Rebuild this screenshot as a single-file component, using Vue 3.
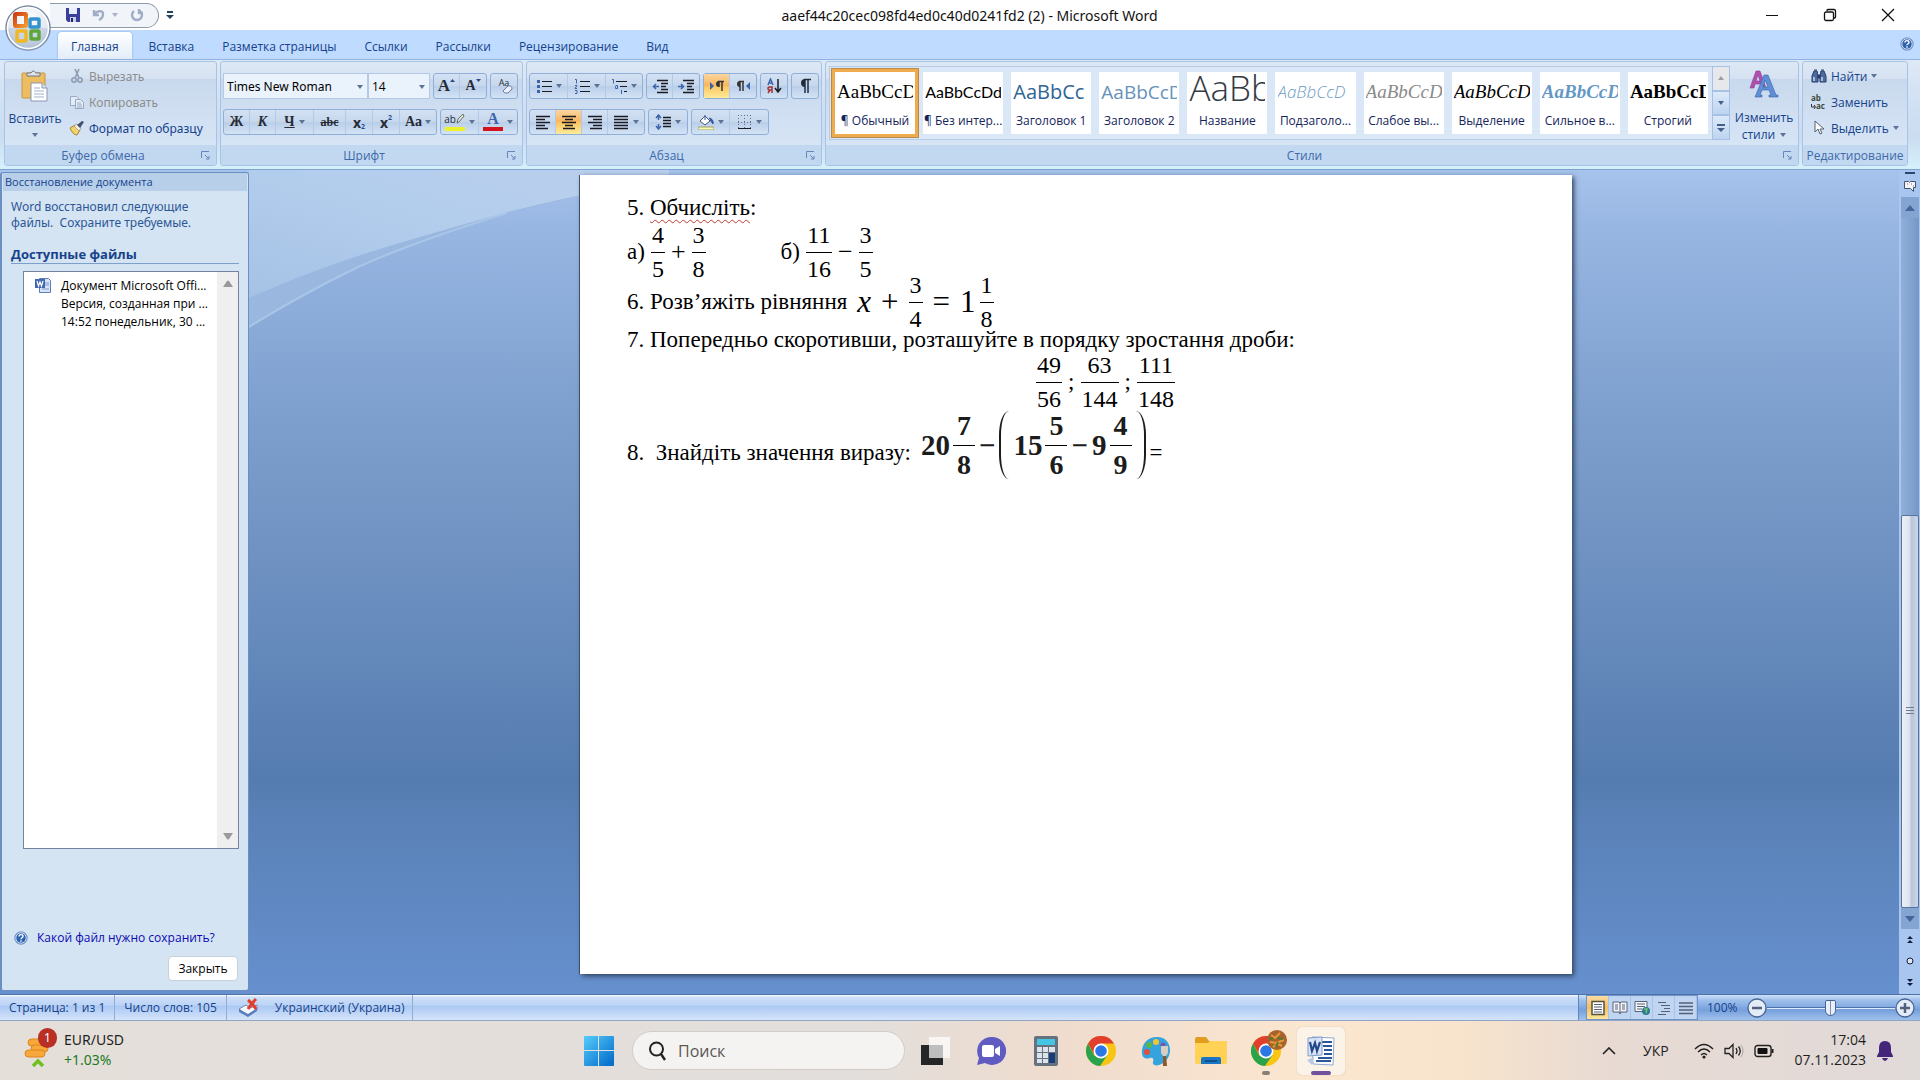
<template>
  <div class="window">
    <header class="title-bar">
      <div class="quick-access">
        <button class="plain" aria-label="Сохранить">
          <svg width="14" height="14" viewBox="0 0 14 14"><path d="M0 0h14v14H2l-2-2z" fill="#3b3f9c" /><path d="M3 0h8v6H3z" fill="#e8eefb" /><path d="M4 9h6v5H4z" fill="#c8d0ee" /><path d="M5 10h2v4H5z" fill="#23266e" /></svg>
        </button>
        <button class="plain undo" aria-label="Отменить">
          <svg width="14" height="14" viewBox="0 0 14 14"><path d="M2 2v5h5M2 7c3-5 9-5 9-1 0 3-2 5-4 6" fill="none" stroke="#9fadc6" stroke-width="2.4" /></svg>
          <svg width="6" height="4" viewBox="0 0 6 4"><path d="M0 0h6L3 4z" fill="#a9b3c4" /></svg>
        </button>
        <button class="plain" aria-label="Повторить">
          <svg width="14" height="14" viewBox="0 0 14 14"><path d="M4 3a5 5 0 1 0 6 0M9 1v4h4" fill="none" stroke="#9fadc6" stroke-width="2.4" /></svg>
        </button>
      </div>
      <button class="plain customize" aria-label="Настройка панели">
        <svg width="8" height="8" viewBox="0 0 8 8"><path d="M1 0h6v2H1zM0 4h8L4 8z" fill="#23415f" /></svg>
      </button>
      <h1>aaef44c20cec098fd4ed0c40d0241fd2 (2) - Microsoft Word</h1>
      <div class="window-buttons">
        <button class="plain" aria-label="Свернуть"><svg width="14" height="14" viewBox="0 0 14 14"><path d="M1 7.500h12" stroke="#111" /></svg></button>
        <button class="plain" aria-label="Восстановить"><svg width="14" height="14" viewBox="0 0 14 14"><path d="M4 3V2.500q0-1 1-1h6q1.500 0 1.500 1.500v6q0 1-1 1H11" fill="none" stroke="#111" stroke-width="1.300" /><rect x="1.500" y="4" width="9" height="8.500" rx="1.500" fill="none" stroke="#111" stroke-width="1.300" /></svg></button>
        <button class="plain" aria-label="Закрыть окно"><svg width="14" height="14" viewBox="0 0 14 14"><path d="M1 1l12 12M13 1L1 13" stroke="#111" stroke-width="1.300" /></svg></button>
      </div>
    </header>

    <button class="orb" aria-label="Office">
      <svg width="48" height="48" viewBox="0 0 48 48">
        <defs>
          <radialGradient id="orbFill" cx=".5" cy=".3" r=".75"><stop offset="0" stop-color="#fff" /><stop offset=".6" stop-color="#e3e8f0" /><stop offset="1" stop-color="#9fb0c8" /></radialGradient>
          <linearGradient id="orange" x2="1" y2="1"><stop offset="0" stop-color="#cf3f12" /><stop offset="1" stop-color="#f49a2e" /></linearGradient>
        </defs>
        <circle cx="24" cy="24" r="22" fill="url(#orbFill)" stroke="#7c8ca6" stroke-width="1.500" />
        <path d="M3 25a21 21 0 0 0 42 0q-21-6-42 0z" fill="#aebfd8" opacity=".5" />
        <circle cx="24" cy="24" r="20.500" fill="none" stroke="#fff" stroke-width="1.500" />
        <rect x="11" y="10" width="11" height="12" rx="1" fill="none" stroke="url(#orange)" stroke-width="4" />
        <rect x="26" y="15" width="9" height="8" rx="1" fill="none" stroke="#3493cf" stroke-width="3.500" />
        <rect x="13" y="27" width="9" height="10" rx="1" fill="none" stroke="#efb825" stroke-width="3.500" />
        <rect x="27" y="27" width="8" height="8" rx="1" fill="none" stroke="#5da63b" stroke-width="3.500" />
      </svg>
    </button>

    <nav class="tabs">
      <a v-for="(tab, index) in tabs" :key="tab" href="#" class="tab" :class="{ active: index === 0 }">{{ tab }}</a>
      <button class="plain help" aria-label="Справка">
        <svg width="14" height="14" viewBox="0 0 14 14"><circle cx="7" cy="7" r="6.300" fill="#2d62ae" stroke="#85a9da" /><circle cx="7" cy="7" r="5.200" fill="none" stroke="#fff" stroke-width=".8" /><path d="M5 5.600q0-2 2-2t2 1.700q0 1-1.200 1.700-.8.500-.8 1.200M7 9.300v1.400" fill="none" stroke="#fff" stroke-width="1.400" /></svg>
      </button>
    </nav>

    <section class="ribbon">
      <div class="group clipboard">
        <div class="group-body">
          <button class="big-button">
            <svg width="28" height="32" viewBox="0 0 28 32"><path d="M1 4q0-1 1-1h21q1 0 1 1v23q0 1-1 1H2q-1 0-1-1z" fill="#edbd62" stroke="#c79743" /><path d="M6 6V3h4q2-4 5 0h4v3z" fill="#dfe3ea" stroke="#6f7786" /><path d="M10 13h11l5 5v13H10z" fill="#fff" stroke="#8a97ac" /><path d="M21 13v5h5" fill="#dbe5f4" stroke="#8a97ac" /><path d="M13 18h6M13 21h10M13 24h10M13 27h10" stroke="#9fb1cf" /></svg>
            <span>Вставить</span>
            <svg class="arrow" width="6" height="4" viewBox="0 0 6 4"><path d="M0 0h6L3 4z" /></svg>
          </button>
          <div class="stack">
            <button class="text-button disabled">
              <svg width="16" height="16" viewBox="0 0 16 16"><path d="M6 1l4 9M10 1L6 10" stroke="#8e9bb0" stroke-width="1.600" /><circle cx="5" cy="12" r="2.200" fill="none" stroke="#8e9bb0" stroke-width="1.500" /><circle cx="11" cy="12" r="2.200" fill="none" stroke="#8e9bb0" stroke-width="1.500" /></svg>
              Вырезать
            </button>
            <button class="text-button disabled">
              <svg width="16" height="16" viewBox="0 0 16 16"><path d="M1.500 2.500h6l2 2v7h-8z" fill="#e6ecf6" stroke="#9aa9c2" /><path d="M6.500 5.500h5l3 3v6h-8z" fill="#e6ecf6" stroke="#9aa9c2" /><path d="M8 9h4M8 11h5M8 13h5" stroke="#9aa9c2" /></svg>
              Копировать
            </button>
            <button class="text-button">
              <svg width="16" height="16" viewBox="0 0 16 16"><path d="M1 8l5-3 5 5-3 5q-4 0-7-7z" fill="#f2d46b" stroke="#a58732" /><path d="M5 6l3-2 4 4-2 3z" fill="#f6f0dc" stroke="#8c8c8c" stroke-width=".7" /><path d="M8 5l5-4 2 1-4 6z" fill="#45526d" /></svg>
              Формат по образцу
            </button>
          </div>
        </div>
        <div class="group-title"><span>Буфер обмена</span><LaunchIcon /></div>
      </div>

      <div class="group font">
        <div class="group-body rows">
          <div class="row">
            <div class="combo">
              <label class="select-box wide"><select aria-label="Шрифт"><option>Times New Roman</option></select><svg class="arrow" width="6" height="4" viewBox="0 0 6 4"><path d="M0 0h6L3 4z" /></svg></label>
              <label class="select-box"><select aria-label="Размер"><option>14</option></select><svg class="arrow" width="6" height="4" viewBox="0 0 6 4"><path d="M0 0h6L3 4z" /></svg></label>
            </div>
            <div class="tools">
              <button class="tool serif big">A<svg class="mark" width="5" height="3" viewBox="0 0 5 3"><path d="M0 3h5L2.500 0z" fill="#2a4a86" /></svg></button>
              <button class="tool serif">A<svg class="mark" width="5" height="3" viewBox="0 0 5 3"><path d="M0 0h5L2.500 3z" fill="#2a4a86" /></svg></button>
            </div>
            <div class="tools">
              <button class="tool clear" aria-label="Очистить формат">Aa<svg class="eraser" width="11" height="9" viewBox="0 0 11 9"><path d="M1 6l5-5q4-1 4 3L6 8Q2 9 1 6z" fill="#eef1fb" stroke="#6a7aa8" /></svg></button>
            </div>
          </div>
          <div class="row">
            <div class="tools">
              <button class="tool serif">Ж</button>
              <button class="tool serif italic">К</button>
              <button class="tool serif split"><u>Ч</u><svg class="arrow" width="6" height="4" viewBox="0 0 6 4"><path d="M0 0h6L3 4z" /></svg></button>
              <button class="tool serif small"><s>abc</s></button>
              <button class="tool sans">x<sub>2</sub></button>
              <button class="tool sans">x<sup>2</sup></button>
              <button class="tool serif case">Aa<svg class="arrow" width="6" height="4" viewBox="0 0 6 4"><path d="M0 0h6L3 4z" /></svg></button>
            </div>
            <div class="tools">
              <button class="tool split color"><span class="swatch yellow">ab<svg width="9" height="11" viewBox="0 0 9 11"><path d="M1 10l1-4 5-5 1 2-5 6z" fill="#dfe4ee" stroke="#6b6f52" /></svg></span><svg class="arrow" width="6" height="4" viewBox="0 0 6 4"><path d="M0 0h6L3 4z" /></svg></button>
              <button class="tool split color"><span class="swatch red">A</span><svg class="arrow" width="6" height="4" viewBox="0 0 6 4"><path d="M0 0h6L3 4z" /></svg></button>
            </div>
          </div>
        </div>
        <div class="group-title"><span>Шрифт</span><LaunchIcon /></div>
      </div>

      <div class="group paragraph">
        <div class="group-body rows">
          <div v-for="(row, r) in paragraphRows" :key="r" class="row">
            <div v-for="(tools, g) in row" :key="g" class="tools">
              <button v-for="tool in tools" :key="tool.name" class="tool" :class="{ split: tool.split, on: tool.on }" :aria-label="tool.name">
                <svg width="16" height="16" viewBox="0 0 16 16">
                  <path v-for="(p, i) in tool.paths" :key="i" :d="p.d" :fill="p.fill || 'none'" :stroke="p.stroke" :stroke-width="p.width || 1" :stroke-dasharray="p.dash" />
                </svg>
                <svg v-if="tool.split" class="arrow" width="6" height="4" viewBox="0 0 6 4"><path d="M0 0h6L3 4z" /></svg>
              </button>
            </div>
          </div>
        </div>
        <div class="group-title"><span>Абзац</span><LaunchIcon /></div>
      </div>

      <div class="group styles">
        <div class="group-body">
          <div class="gallery">
            <button v-for="style in styles" :key="style.label" class="style-card" :class="{ selected: style.selected }">
              <span class="preview" :class="style.kind">{{ style.sample }}</span>
              <span class="style-label">{{ style.label }}</span>
            </button>
          </div>
          <div class="gallery-scroll">
            <button class="off" aria-label="Вверх"><svg width="6" height="4" viewBox="0 0 6 4"><path d="M0 4h6L3 0z" fill="#9c9ca0" /></svg></button>
            <button aria-label="Вниз"><svg width="6" height="4" viewBox="0 0 6 4"><path d="M0 0h6L3 4z" fill="#44618e" /></svg></button>
            <button aria-label="Дополнительно"><svg width="8" height="8" viewBox="0 0 8 8"><path d="M0 0h8v2H0zM0 4h8L4 8z" fill="#44618e" /></svg></button>
          </div>
          <button class="big-button change">
            <svg width="30" height="28" viewBox="0 0 30 28"><path d="M1 18L7 1h4l6 17h-4l-1-4H6l-1 4zM7 11h4L9 5z" fill="#b04fae" stroke="#8a3b93" stroke-width=".6" /><path d="M6 27L15 5h4l8 20h2v2h-9v-2h2l-2-5h-7l-2 5h2v2zM14 17h5l-3-7z" fill="#5f8fd6" stroke="#3763aa" stroke-width=".6" /></svg>
            <span>Изменить</span>
            <span>стили <svg class="arrow" width="6" height="4" viewBox="0 0 6 4"><path d="M0 0h6L3 4z" /></svg></span>
          </button>
        </div>
        <div class="group-title"><span>Стили</span><LaunchIcon /></div>
      </div>

      <div class="group editing">
        <div class="group-body">
          <div class="stack">
            <button class="text-button">
              <svg width="16" height="16" viewBox="0 0 16 16"><path d="M1 14V8l2-5h3l1 5v6zM9 14V8l1-5h3l2 5v6z" fill="#4d6a9c" stroke="#27406e" /><path d="M7 7h2v3H7zM3 2h3M10 2h3" fill="#27406e" stroke="#27406e" /><path d="M3 9v4M11 9v4" stroke="#c8d8f0" stroke-width="1.500" /></svg>
              Найти <svg class="arrow" width="6" height="4" viewBox="0 0 6 4"><path d="M0 0h6L3 4z" /></svg>
            </button>
            <button class="text-button">
              <span class="replace-icon">
                <b>ab</b>
                <b><svg width="5" height="5" viewBox="0 0 5 5"><path d="M.5 0v3H4M3 1l1.500 2L3 5" fill="none" stroke="#333" /></svg>ac</b>
              </span>
              Заменить
            </button>
            <button class="text-button">
              <svg width="16" height="16" viewBox="0 0 16 16"><path d="M4 1v11l3-3 2 5 2-1-2-4h4z" fill="#fff" stroke="#55606f" /></svg>
              Выделить <svg class="arrow" width="6" height="4" viewBox="0 0 6 4"><path d="M0 0h6L3 4z" /></svg>
            </button>
          </div>
        </div>
        <div class="group-title"><span>Редактирование</span></div>
      </div>
    </section>

    <main class="workspace">
      <aside class="recovery">
        <h2>Восстановление документа</h2>
        <p class="hint">Word восстановил следующие<br>файлы.&nbsp; Сохраните требуемые.</p>
        <h3>Доступные файлы</h3>
        <div class="file-list">
          <a href="#" class="file">
            <svg width="16" height="16" viewBox="0 0 16 16"><path d="M4.500 1.500h9l2 2v12h-11z" fill="#d7e3f7" stroke="#5d7fb8" /><path d="M9 6h5M9 8h5M7 12h7" stroke="#7f9bcb" /><path d="M0 2h10v9H0z" fill="#3f68b0" /><path d="M2 4l1.500 5L5 5l1.500 4L8 4" fill="none" stroke="#fff" stroke-width="1.200" /></svg>
            <span>Документ Microsoft Offi...<br>Версия, созданная при ...<br>14:52 понедельник, 30 ...</span>
          </a>
          <div class="list-scroll">
            <svg width="10" height="7" viewBox="0 0 10 7"><path d="M0 7h10L6 1q-1-1-2 0z" fill="#9a9a9a" /></svg>
            <svg width="10" height="7" viewBox="0 0 10 7"><path d="M0 0h10L6 6q-1 1-2 0z" fill="#9a9a9a" /></svg>
          </div>
        </div>
        <a href="#" class="which-file">
          <svg width="14" height="14" viewBox="0 0 14 14"><circle cx="7" cy="7" r="6.300" fill="#2d62ae" stroke="#85a9da" /><circle cx="7" cy="7" r="5.200" fill="none" stroke="#fff" stroke-width=".8" /><path d="M5 5.600q0-2 2-2t2 1.700q0 1-1.200 1.700-.8.500-.8 1.200M7 9.300v1.400" fill="none" stroke="#fff" stroke-width="1.400" /></svg>
          Какой файл нужно сохранить?
        </a>
        <button class="close-button">Закрыть</button>
      </aside>

      <div class="desk">
        <svg class="swoosh" width="420" height="160" viewBox="0 0 420 160">
          <defs><linearGradient id="sky" x1="0" y1="1" x2="1" y2="0"><stop offset="0" stop-color="#a5c1e5" /><stop offset=".5" stop-color="#b2cdec" /><stop offset="1" stop-color="#bccfee" /></linearGradient></defs>
          <path d="M0 0V157Q50 126 101 101T258 43Q300 32 420 8V0z" fill="#9ab8df" />
          <path d="M0 157Q50 126 101 101T258 43" fill="none" stroke="#a9c5e8" stroke-width="2" />
          <path d="M0 0V128Q45 108 91 92T241 47Q300 30 420 8V0z" fill="url(#sky)" />
        </svg>
        <article class="paper">
          <p class="line">5. <span class="misspelled">Обчисліть</span>:</p>
          <p class="line fractions">
            <span>а)</span>
            <template v-for="(t, i) in sumA" :key="i"><span v-if="t.n" class="frac"><span>{{ t.n }}</span><span>{{ t.d }}</span></span><span v-else class="operator">{{ t }}</span></template>
            <span class="second">б)</span>
            <template v-for="(t, i) in sumB" :key="i"><span v-if="t.n" class="frac"><span>{{ t.n }}</span><span>{{ t.d }}</span></span><span v-else class="operator">{{ t }}</span></template>
          </p>
          <p class="line fractions equation">
            <span>6. Розв’яжіть рівняння</span>
            <i class="sign">x</i><span class="sign">+</span>
            <span class="frac"><span>3</span><span>4</span></span>
            <span class="sign">=</span>
            <span class="mixed"><span class="sign">1</span><span class="frac"><span>1</span><span>8</span></span></span>
          </p>
          <p class="line short">7. Попередньо скоротивши, розташуйте в порядку зростання дроби:</p>
          <p class="line fractions centered">
            <template v-for="(t, i) in ordering" :key="i"><span v-if="t.n" class="frac"><span>{{ t.n }}</span><span>{{ t.d }}</span></span><span v-else>{{ t }}</span></template>
          </p>
          <p class="line fractions last">
            <span class="low">8.&nbsp; Знайдіть значення виразу:</span>
            <span class="formula">
              <span class="mixed">20<span class="frac"><span>7</span><span>8</span></span></span>
              <span>−</span>
              <span class="bracket"></span>
              <span class="mixed">15<span class="frac"><span>5</span><span>6</span></span></span>
              <span>−</span>
              <span class="mixed">9<span class="frac"><span>4</span><span>9</span></span></span>
              <span class="bracket right"></span>
            </span>
            <span class="low">=</span>
          </p>
        </article>
      </div>

      <div class="scrollbar">
        <span class="splitter"></span>
        <svg class="ruler" width="14" height="14" viewBox="0 0 14 14"><path d="M1.500 2.500h4l1 1 1-1h5v6h-2v4l-3-3h-6z" fill="#f3f6fb" stroke="#44536e" /><path d="M4 5h1M8 5h1M10 7h1" stroke="#b05050" /></svg>
        <button aria-label="Прокрутить вверх"><svg width="10" height="6" viewBox="0 0 10 6"><path d="M0 6h10L5 0z" fill="#45669a" /></svg></button>
        <div class="track"><div class="thumb"><svg width="8" height="8" viewBox="0 0 8 8"><path d="M0 .5h8M0 3.500h8M0 6.500h8" stroke="#6f7c90" /></svg></div></div>
        <button aria-label="Прокрутить вниз"><svg width="10" height="6" viewBox="0 0 10 6"><path d="M0 0h10L5 6z" fill="#45669a" /></svg></button>
        <button class="browse" aria-label="Предыдущая страница"><svg width="6" height="8" viewBox="0 0 6 8"><path d="M0 3h6L3 0zM0 7h6L3 4z" fill="#101c3a" /></svg></button>
        <button class="browse" aria-label="Выбор объекта"><svg width="8" height="8" viewBox="0 0 8 8"><circle cx="4" cy="4" r="3" fill="#dfe6f2" stroke="#101c3a" /></svg></button>
        <button class="browse" aria-label="Следующая страница"><svg width="6" height="8" viewBox="0 0 6 8"><path d="M0 1h6L3 4zM0 5h6L3 8z" fill="#101c3a" /></svg></button>
      </div>
    </main>

    <footer class="status-bar">
      <button class="status">Страница: 1 из 1</button>
      <button class="status">Число слов: 105</button>
      <button class="status language">
        <svg width="22" height="20" viewBox="0 0 22 20"><path d="M1 11l7-4 4 3 7-3v5l-9 6z" fill="#f4f7fc" stroke="#7088b0" /><path d="M1 11l9 5 9-6v3l-9 6-9-5z" fill="#5b7fbd" /><path d="M10 2q4 3 8 9M18 1q-4 4-8 10" stroke="#e2402c" stroke-width="3" fill="none" /></svg>
        Украинский (Украина)
      </button>
      <div class="status-right">
        <div class="views">
          <button v-for="view in views" :key="view.name" :class="{ on: view.on }" :aria-label="view.name">
            <svg width="16" height="16" viewBox="0 0 16 16"><path v-for="(p, i) in view.paths" :key="i" :d="p.d" :fill="p.fill || 'none'" :stroke="p.stroke" :stroke-width="p.width || 1" /></svg>
          </button>
        </div>
        <button class="plain percent">100%</button>
        <button class="plain" aria-label="Уменьшить"><svg width="20" height="20" viewBox="0 0 20 20"><circle cx="10" cy="10" r="9" fill="#e4ecf7" stroke="#4a6490" stroke-width="1.300" /><path d="M5 10h10" stroke="#53617c" stroke-width="2.500" /></svg></button>
        <input class="zoom" type="range" min="0" max="100" value="50" aria-label="Масштаб">
        <button class="plain" aria-label="Увеличить"><svg width="20" height="20" viewBox="0 0 20 20"><circle cx="10" cy="10" r="9" fill="#e4ecf7" stroke="#4a6490" stroke-width="1.300" /><path d="M5 10h10M10 5v10" stroke="#53617c" stroke-width="2.500" /></svg></button>
      </div>
    </footer>

    <div class="taskbar">
      <button class="widget">
        <span class="coins">
          <svg width="30" height="38" viewBox="0 0 30 38"><g fill="#f6a83a" stroke="#e08418"><rect x="4" y="8" width="17" height="7" rx="3.500" /><rect x="7" y="14" width="17" height="7" rx="3.500" /><rect x="1" y="19" width="20" height="7" rx="3.500" /></g><path d="M9 35l5-5 5 5" fill="none" stroke="#6fbf22" stroke-width="3.500" /></svg>
          <b class="badge">1</b>
        </span>
        <span class="rate">EUR/USD<br><span class="up">+1.03%</span></span>
      </button>
      <div class="apps">
        <button class="app" aria-label="Пуск">
          <svg width="30" height="30" viewBox="0 0 30 30"><defs><linearGradient id="win" x2="1" y2="1"><stop offset="0" stop-color="#55ccfa" /><stop offset="1" stop-color="#0067c8" /></linearGradient></defs><path d="M1 0h13v14H0V1q0-1 1-1zM15 0h14q1 0 1 1v13H15zM0 15h14v15H1q-1 0-1-1zM15 15h15v14q0 1-1 1H15z" fill="url(#win)" /></svg>
        </button>
        <label class="search">
          <svg width="20" height="20" viewBox="0 0 20 20"><circle cx="10.500" cy="8" r="6.500" fill="none" stroke="#222" stroke-width="2" /><path d="M15 13l4 6" stroke="#222" stroke-width="2.400" /></svg>
          <input type="text" placeholder="Поиск" aria-label="Поиск">
        </label>
        <button class="app" aria-label="Представление задач">
          <svg width="30" height="30" viewBox="0 0 30 30"><path d="M0 9h22v20H0z" fill="#262626" /><path d="M8 1h21v21H8z" fill="#fff" opacity=".7" /></svg>
        </button>
        <button class="app" aria-label="Чат">
          <svg width="30" height="30" viewBox="0 0 30 30"><path d="M15 1a14 14 0 1 1-6 26l-8 2 2-7A14 14 0 0 1 15 1z" fill="#5f5bc0" /><rect x="6" y="9" width="12" height="12" rx="2" fill="#fff" /><path d="M19 13l5-3v10l-5-3z" fill="#fff" /></svg>
        </button>
        <button class="app" aria-label="Калькулятор">
          <svg width="30" height="30" viewBox="0 0 30 30"><rect x="3" y="0" width="24" height="30" rx="2" fill="#68727e" /><path d="M6 3h18v6H6z" fill="#42c6e4" /><path d="M6 11h5v5H6zM12 11h5v5h-5zM18 11h6v5h-6zM6 17h5v5H6zM12 17h5v5h-5zM6 23h5v4H6zM12 23h5v4h-5z" fill="#dce3eb" /><path d="M18 17h6v10h-6z" fill="#173e76" /></svg>
        </button>
        <button class="app" aria-label="Chrome">
          <svg width="30" height="30" viewBox="0 0 30 30"><circle cx="15" cy="15" r="15" fill="#f9c513" /><path d="M2 7.500a15 15 0 0 1 26 0H15L8.500 19z" fill="#e23e2e" /><path d="M2 7.500a15 15 0 0 0 12 22.500l7.500-11-13 1z" fill="#2ba24c" /><circle cx="15" cy="15" r="7.500" fill="#fff" /><circle cx="15" cy="15" r="5.800" fill="#2b78e4" /></svg>
        </button>
        <button class="app" aria-label="Paint">
          <svg width="30" height="30" viewBox="0 0 30 30"><path d="M16 1C5 1 0 10 1 18c1 5 5 5 8 4s4 1 3 4 3 4 6 3c15-4 15-28-2-28z" fill="#35a3de" /><circle cx="8" cy="9" r="3" fill="#58b947" /><circle cx="15" cy="6" r="3" fill="#f3c635" /><circle cx="6" cy="16" r="3" fill="#dd4f3e" /><circle cx="22" cy="9" r="2.500" fill="#7954b4" /><path d="M22 19h3l1 11h-4z" fill="#8b5a2c" /><path d="M20 10h7v7l-2 3h-3l-2-3z" fill="#d9cfc0" /></svg>
        </button>
        <button class="app" aria-label="Проводник">
          <svg width="32" height="30" viewBox="0 0 32 30"><path d="M0 3q0-2 2-2h9l3 4h16q2 0 2 2v7H0z" fill="#e09e1e" /><path d="M0 7h13l2-2h15q2 0 2 2v19q0 2-2 2H2q-2 0-2-2z" fill="#ffd154" /><path d="M6 28v-5q0-2 2-2h16q2 0 2 2v5z" fill="#1975c5" /><path d="M10 24h12v2H10z" fill="#0f4f8f" /></svg>
        </button>
        <button class="app running" aria-label="Chrome, профиль">
          <svg width="36" height="36" viewBox="0 0 36 36"><g transform="translate(0 6)"><circle cx="15" cy="15" r="15" fill="#f9c513" /><path d="M2 7.500a15 15 0 0 1 26 0H15L8.500 19z" fill="#e23e2e" /><path d="M2 7.500a15 15 0 0 0 12 22.500l7.500-11-13 1z" fill="#2ba24c" /><circle cx="15" cy="15" r="7.500" fill="#fff" /><circle cx="15" cy="15" r="5.800" fill="#2b78e4" /></g><circle cx="26" cy="10" r="10" fill="#a9622a" /><path d="M20 5l4 3 5-5M19 12l6 1 8-3M22 17l5-3 4 2" stroke="#e49a3a" stroke-width="2" fill="none" /><path d="M18 9l4-1M27 8l5 1M25 17l2-5" stroke="#4f7a2c" stroke-width="2" /></svg>
        </button>
        <button class="app current" aria-label="Word">
          <svg width="30" height="30" viewBox="0 0 30 30"><path d="M6 1l22 1-1 27-20-1z" fill="#fff" stroke="#8fa7cf" /><path d="M15 6h11M17 10h9M18 14h8M18 18h8M12 22h14M10 25h15" stroke="#2b579a" stroke-width="2" /><path d="M2 2l14-1v18L2 20z" fill="#d8e4f6" stroke="#7f9bcb" /><path d="M4 6l2 9 3-8 2 8 3-9" fill="none" stroke="#23498c" stroke-width="2.200" /><path d="M1 24l7-3-2 8z" fill="#b9c9e4" /></svg>
        </button>
      </div>
      <div class="tray">
        <button class="plain" aria-label="Скрытые значки"><svg width="14" height="8" viewBox="0 0 14 8"><path d="M1 7l6-6 6 6" fill="none" stroke="#222" stroke-width="1.600" /></svg></button>
        <button class="plain lang">УКР</button>
        <button class="plain system" aria-label="Сеть, звук, батарея">
          <svg width="20" height="16" viewBox="0 0 20 16"><path d="M1 6q9-9 18 0M4 9q6-6 12 0M7 12q3-3 6 0" fill="none" stroke="#222" stroke-width="1.500" /><circle cx="10" cy="14" r="1.600" fill="#222" /></svg>
          <svg width="20" height="16" viewBox="0 0 20 16"><path d="M1 5.500h4l4-4v13l-4-4H1z" fill="none" stroke="#222" stroke-width="1.300" /><path d="M12 5q2 3 0 6M14.500 3.500q3.500 4.500 0 9" fill="none" stroke="#222" stroke-width="1.300" /><path d="M17 2q4 6 0 12" fill="none" stroke="#b5b0ac" stroke-width="1.200" /></svg>
          <svg width="20" height="14" viewBox="0 0 20 14"><rect x="1" y="1.500" width="16" height="11" rx="2.500" fill="none" stroke="#222" stroke-width="1.400" /><rect x="3.500" y="4" width="10" height="6" rx="1" fill="#111" /><path d="M18.500 5v4" stroke="#222" stroke-width="2" /></svg>
        </button>
        <button class="plain clock">17:04<br>07.11.2023</button>
        <button class="plain" aria-label="Уведомления"><svg width="16" height="20" viewBox="0 0 16 20"><path d="M8 0q6 0 6 7v4l2 4v1H0v-1l2-4V7q0-7 6-7zM5 17h6q-1 3-3 3t-3-3z" fill="#43257a" /></svg></button>
      </div>
    </div>
  </div>
</template>

<script setup>
import { h } from 'vue'

// Small arrow in the corner of a ribbon group
const LaunchIcon = () => h('svg', { class: 'launch', width: 9, height: 9, viewBox: '0 0 9 9' }, [
  h('path', { d: 'M.5 7V.5H8M4 4l4 4M8 5v3H5', fill: 'none', stroke: '#6487b7' })
])

const tabs = ['Главная', 'Вставка', 'Разметка страницы', 'Ссылки', 'Рассылки', 'Рецензирование', 'Вид']

const ink = '#1b1b24'
const blue = '#3c64ad'

const paragraphRows = [
  [
    [
      { name: 'Маркеры', split: true, paths: [{ d: 'M6 3.500h10M6 8.500h10M6 13.500h10', stroke: ink }, { d: 'M1 2h3v3H1zM1 7h3v3H1zM1 12h3v3H1z', fill: blue }] },
      { name: 'Нумерация', split: true, paths: [{ d: 'M6 3.500h10M6 8.500h10M6 13.500h10', stroke: ink }, { d: 'M1 1.500h1.500v4M1 7.500h2l-2 3h2M1 12.500h2v3H1', stroke: blue }] },
      { name: 'Многоуровневый список', split: true, paths: [{ d: 'M5 3.500h11M9 8.500h7M13 13.500h3', stroke: ink }, { d: 'M1 1.500h1.500v4M4.500 7.500h2v3h-2v-2M10.500 12v4', stroke: blue }] }
    ],
    [
      { name: 'Уменьшить отступ', paths: [{ d: 'M5 2.500h11M9 5.500h7M9 8.500h5M9 11.500h7M5 14.500h11', stroke: ink, width: 1.500 }, { d: 'M7 8.500H2M4 6L1.500 8.500 4 11', stroke: blue, width: 1.500 }] },
      { name: 'Увеличить отступ', paths: [{ d: 'M5 2.500h11M9 5.500h7M9 8.500h5M9 11.500h7M5 14.500h11', stroke: ink, width: 1.500 }, { d: 'M0 8.500h5M3 6l2.500 2.500L3 11', stroke: blue, width: 1.500 }] }
    ],
    [
      { name: 'Слева направо', on: true, paths: [{ d: 'M1 4v8l4-4z', fill: blue }, { d: 'M10 9V4M13 13V3M9 3.500h6', stroke: '#333', width: 1.500 }, { d: 'M10 3v6q-3 0-3-3t3-3z', fill: '#333' }] },
      { name: 'Справа налево', paths: [{ d: 'M15 4v8l-4-4z', fill: blue }, { d: 'M5 13V3M8 13V3M4 3.500h5', stroke: '#333', width: 1.500 }, { d: 'M5 3v6q-3 0-3-3t3-3z', fill: '#333' }] }
    ],
    [
      { name: 'Сортировка', paths: [{ d: 'M2 7l2.500-6L7 7M3 5h3', stroke: blue, width: 1.500 }, { d: 'M6 15V9H4Q2 9 2 10.500T4 12h2M4 12l-2 3', stroke: '#a83232', width: 1.500 }, { d: 'M12 1v12M9 10l3 4 3-4', stroke: ink, width: 1.500 }] }
    ],
    [
      { name: 'Знаки абзаца', paths: [{ d: 'M8 15V1.500M11 15V1.500M7 1.500h7', stroke: '#222b3c', width: 1.500 }, { d: 'M8 1v8q-4 0-4-4t4-4z', fill: '#222b3c' }] }
    ]
  ],
  [
    [
      { name: 'По левому краю', paths: [{ d: 'M1 2.500h14M1 5.500h9M1 8.500h14M1 11.500h9M1 14.500h12', stroke: ink, width: 1.400 }] },
      { name: 'По центру', on: true, paths: [{ d: 'M1 2.500h14M4 5.500h8M1 8.500h14M4 11.500h8M2 14.500h12', stroke: ink, width: 1.400 }] },
      { name: 'По правому краю', paths: [{ d: 'M1 2.500h14M6 5.500h9M1 8.500h14M6 11.500h9M3 14.500h12', stroke: ink, width: 1.400 }] },
      { name: 'По ширине', split: true, paths: [{ d: 'M1 2.500h14M1 5.500h14M1 8.500h14M1 11.500h14M1 14.500h14', stroke: ink, width: 1.400 }] }
    ],
    [
      { name: 'Интервал', split: true, paths: [{ d: 'M8 3.500h8M8 6.500h8M8 9.500h8M8 12.500h8', stroke: ink, width: 1.300 }, { d: 'M3.500 2v4M3.500 10v4M1 4l2.500-3L6 4M1 12l2.500 3L6 12', stroke: blue, width: 1.500 }] }
    ],
    [
      { name: 'Заливка', split: true, paths: [{ d: 'M2 7l5-5 5 5-5 4z', fill: '#fff', stroke: '#4a5a76' }, { d: 'M7 1v5M11 4q5 1 4 6l-3-4', stroke: '#3658a0', fill: '#3658a0' }, { d: 'M0 13h16v3H0z', fill: '#f7f7b8', stroke: '#9ba06a' }] },
      { name: 'Границы', split: true, paths: [{ d: 'M2.500 1v13M8.500 1v13M14.500 1v13M2 1.500h13M2 8.500h13', stroke: '#5f6f8c', dash: '1 2' }, { d: 'M2 14.500h13', stroke: ink }] }
    ]
  ]
]

const styles = [
  { label: '¶ Обычный', kind: 'normal', sample: 'AaBbCcD', selected: true },
  { label: '¶ Без интер...', kind: 'compact', sample: 'AaBbCcDd' },
  { label: 'Заголовок 1', kind: 'heading-one', sample: 'AaBbCc' },
  { label: 'Заголовок 2', kind: 'heading-two', sample: 'AaBbCcD' },
  { label: 'Название', kind: 'title', sample: 'AaBb' },
  { label: 'Подзаголо...', kind: 'subtitle', sample: 'AaBbCcD' },
  { label: 'Слабое вы...', kind: 'subtle', sample: 'AaBbCcD' },
  { label: 'Выделение', kind: 'emphasis', sample: 'AaBbCcD' },
  { label: 'Сильное в...', kind: 'intense', sample: 'AaBbCcD' },
  { label: 'Строгий', kind: 'strong', sample: 'AaBbCcD' }
]

const sumA = [{ n: '4', d: '5' }, '+', { n: '3', d: '8' }]
const sumB = [{ n: '11', d: '16' }, '−', { n: '3', d: '5' }]
const ordering = [{ n: '49', d: '56' }, ';', { n: '63', d: '144' }, ';', { n: '111', d: '148' }]

const gray = '#566176'
const views = [
  { name: 'Разметка', on: true, paths: [{ d: 'M2 1.500h12v13H2z', fill: '#fff', stroke: '#55503f', width: 1.500 }, { d: 'M4 4.500h8M4 7h8M4 9.500h8M4 12h8', stroke: gray }] },
  { name: 'Чтение', paths: [{ d: 'M1 2h6l1 1 1-1h6v10H9l-1 2-1-2H1z', fill: '#f4f6fa', stroke: gray }, { d: 'M8 3v10M3 5h3M3 7h3M3 9h3M10 5h3M10 7h3M10 9h3', stroke: gray }] },
  { name: 'Веб-документ', paths: [{ d: 'M1 1.500h12v10H1z', fill: '#f4f6fa', stroke: gray }, { d: 'M3 4h8M3 6.500h8M3 9h5', stroke: gray }, { d: 'M8 11a4 4 0 1 1 8 0 4 4 0 1 1-8 0', fill: '#2f7d8f' }, { d: 'M10 9h3l-1 4', stroke: '#6fc27b', width: 1.500 }] },
  { name: 'Структура', paths: [{ d: 'M2 2.500h8M5 5.500h9M8 8.500h6M5 11.500h9M2 14.500h8', stroke: gray }] },
  { name: 'Черновик', paths: [{ d: 'M1 3h14M1 6.500h14M1 10h14M1 13.500h14', stroke: gray, width: 1.400 }] }
]
</script>

<style>
body {
  margin: 0;
}

.launch {
  flex: none;
}
</style>

<style scoped>
.window {
  display: flex;
  flex-direction: column;
  min-height: 100vh;
  position: relative;
  font-family: "Open Sans", "Noto Sans", sans-serif;
  font-size: 12px;
  color: #15428b;
  background: #bfdbff;
}

button,
input,
select {
  font: inherit;
  color: inherit;
  margin: 0;
  padding: 0;
  border: 0;
  background: none;
}

button {
  display: flex;
  align-items: center;
  justify-content: center;
  white-space: nowrap;
}

a {
  color: inherit;
  text-decoration: none;
}

svg {
  flex: none;
}

.arrow {
  fill: #5d7396;
}

/* Title bar */
.title-bar {
  display: flex;
  align-items: center;
  height: 30px;
  background: #fff;
  color: #111;
}

.quick-access {
  display: flex;
  align-items: center;
  gap: 12px;
  height: 23px;
  margin-left: 50px;
  padding: 0 14px 0 16px;
  border: 1px solid #8f99a8;
  border-left: 0;
  border-radius: 0 13px 13px 0;
  background: #f1f4f9;
}

.undo {
  gap: 6px;
}

.customize {
  margin-left: 7px;
}

.title-bar h1 {
  flex: 1;
  margin: 0;
  font-family: "Noto Sans", "Open Sans", sans-serif;
  font-size: 14px;
  font-weight: 400;
  text-align: center;
}

.window-buttons {
  display: flex;
  gap: 44px;
  padding-right: 25px;
}

.orb {
  position: absolute;
  left: 4px;
  top: 4px;
}

/* Tabs */
.tabs {
  display: flex;
  align-items: flex-end;
  height: 29px;
  padding-left: 58px;
}

.tab {
  height: 27px;
  padding: 0 14px;
  line-height: 29px;
}

.tab.active {
  margin-right: 3px;
  padding: 0 13px;
  border-radius: 4px 4px 0 0;
  background: linear-gradient(#fff, #e3edf9);
  box-shadow: 0 0 2px #6f9bd4;
}

.help {
  margin: 0 6px 8px auto;
}

/* Ribbon */
.ribbon {
  display: flex;
  gap: 3px;
  height: 111px;
  padding: 1px 12px 3px 4px;
  border-top: 1px solid #8db2e3;
  border-bottom: 1px solid #7fa3cf;
  background: linear-gradient(#dfe9f6, #d3e2f4 30%, #cbdcf1 70%, #d5f0fb);
  box-sizing: border-box;
}

.group {
  display: flex;
  flex-direction: column;
  border: 1px solid #a8c3e3;
  border-radius: 3px;
  box-sizing: border-box;
  overflow: hidden;
  background: linear-gradient(#dde8f5, #d6e2f2 16%, #c9d9ed 17%, #dae8f8);
}

.clipboard {
  width: 213px;
}

.font {
  width: 303px;
}

.paragraph {
  width: 296px;
}

.styles {
  flex: 1;
  min-width: 0;
}

.editing {
  width: 106px;
}

.group-body {
  display: flex;
  flex: 1;
  min-height: 0;
}

.group-title {
  display: flex;
  align-items: center;
  height: 20px;
  padding: 0 6px 0 0;
  background: #c2d8f0;
  color: #3e6aaa;
}

.group-title span {
  flex: 1;
  text-align: center;
}

.editing .group-title {
  padding: 0;
}

.big-button {
  flex-direction: column;
  justify-content: flex-start;
  width: 60px;
  padding-top: 8px;
  line-height: 17px;
}

.big-button span {
  padding-top: 8px;
}

.big-button .arrow {
  margin-top: 6px;
}

.stack {
  display: flex;
  flex-direction: column;
  padding: 1px 0 0 4px;
}

.text-button {
  gap: 4px;
  height: 26px;
  justify-content: flex-start;
  font-family: "Noto Sans", "Open Sans", sans-serif;
}

.disabled {
  color: #8d8d8d;
}

.editing .stack {
  padding-left: 8px;
}

.editing .text-button {
  font-family: "Open Sans", "Noto Sans", sans-serif;
}

.replace-icon {
  display: flex;
  flex-direction: column;
  width: 16px;
  font-size: 8px;
  line-height: 8px;
  color: #3d4b3d;
  text-align: left;
}

.rows {
  flex-direction: column;
  gap: 10px;
  padding: 11px 2px 0 2px;
}

.row {
  display: flex;
  gap: 3px;
}

.combo {
  display: flex;
}

.select-box {
  position: relative;
  width: 62px;
  height: 26px;
}

.select-box.wide {
  width: 145px;
}

.select-box select {
  appearance: none;
  width: 100%;
  height: 26px;
  padding-left: 3px;
  border: 1px solid #b3c9e6;
  background: #eaf2fb;
  box-sizing: border-box;
  color: #000;
}

.select-box.wide select {
  font-family: "Noto Sans", "Open Sans", sans-serif;
}

.select-box .arrow {
  position: absolute;
  right: 5px;
  top: 12px;
}

.tools {
  display: flex;
  height: 26px;
  border: 1px solid #8fafd9;
  border-radius: 3px;
  box-sizing: border-box;
  background: linear-gradient(#d3e1f3, #c6d7ed 50%, #b9cee9 51%, #d3e3f5);
}

.tool {
  position: relative;
  width: 26px;
  gap: 4px;
  border-right: 1px solid #b3c9e6;
  box-sizing: border-box;
  color: #262b36;
}

.tool:last-child {
  border-right: 0;
}

.tool.split {
  width: 38px;
}

.paragraph .tools:first-child .tool.split:last-child {
  width: 36px;
}

.tool.on {
  background: linear-gradient(#fbd6a0, #f8b45c 50%, #fbc55f 51%, #feea9a);
}

.tool.serif {
  font-family: "Liberation Serif", serif;
  font-weight: 700;
  font-size: 14px;
}

.tool.big {
  font-size: 17px;
}

.tool.small {
  width: 32px;
  font-size: 12px;
}

.tool.italic {
  font-style: italic;
}

.tool.case {
  width: 36px;
  gap: 3px;
}

.tool.sans {
  width: 27px;
  gap: 0;
  font-weight: 700;
  font-size: 14px;
}

.tool.sans sub,
.tool.sans sup {
  font-size: 7px;
  color: #2c4f91;
}

.tool.sans sub {
  margin-top: 9px;
}

.tool.sans sup {
  margin-bottom: 9px;
}

.mark {
  align-self: flex-start;
  margin: 5px 0 0 -4px;
}

.tool.clear {
  font-size: 9px;
  align-items: flex-start;
  padding-top: 2px;
}

.eraser {
  position: absolute;
  right: 4px;
  bottom: 4px;
}

.swatch {
  display: flex;
  justify-content: center;
  width: 20px;
  height: 18px;
  box-sizing: border-box;
  font-size: 10px;
  line-height: 12px;
  border-bottom: 4px solid #eef22a;
}

.swatch.red {
  border-color: #d3121d;
  font-family: "Liberation Serif", serif;
  font-weight: 700;
  font-size: 16px;
  color: #3c64ad;
}

/* Style gallery */
.gallery {
  display: flex;
  flex: 1;
  min-width: 0;
  height: 74px;
  margin: 4px 0 0 3px;
  padding-left: 1px;
  border: 1px solid #b5cbe6;
  border-right: 0;
  box-sizing: border-box;
  background: #d9e7f7;
}

.style-card {
  flex-direction: column;
  justify-content: flex-start;
  flex: 1;
  min-width: 0;
  height: 62px;
  margin: 5px 4px;
  overflow: hidden;
  background: #fff;
}

.style-card.selected {
  outline: 3px solid #eeac4e;
  box-shadow: 0 0 0 4px #b98a4a;
}

.preview {
  width: 76px;
  height: 36px;
  overflow: hidden;
  text-align: left;
  line-height: 40px;
  color: #000;
}

.style-label {
  color: #14245c;
  line-height: 26px;
}

.preview.normal,
.preview.emphasis,
.preview.subtle,
.preview.intense,
.preview.strong {
  font-family: "Liberation Serif", serif;
  font-size: 19px;
}

.preview.compact {
  font-family: Lato, sans-serif;
  font-size: 16px;
}

.preview.heading-one,
.preview.heading-two {
  font-size: 20px;
  color: #2f6495;
}

.preview.heading-two {
  font-size: 19px;
  color: #6792bb;
}

.preview.title {
  font-size: 35px;
  font-weight: 300;
  line-height: 32px;
  color: #333a44;
}

.preview.subtitle {
  font-size: 17px;
  font-weight: 300;
  font-style: italic;
  color: #6c9bc4;
}

.preview.emphasis,
.preview.subtle,
.preview.intense {
  font-style: italic;
}

.preview.subtle {
  color: #8a8a8a;
}

.preview.intense,
.preview.strong {
  font-weight: 700;
}

.preview.intense {
  color: #6498c4;
}

.gallery-scroll {
  display: flex;
  flex-direction: column;
  width: 18px;
  height: 74px;
  margin-top: 4px;
}

.gallery-scroll button {
  flex: 1;
  border: 1px solid #a6c1e3;
  background: linear-gradient(#dceafa, #bed4ef);
}

.gallery-scroll .off {
  background: #e6e8ec;
}

.change {
  width: 68px;
}

.change span {
  padding-top: 11px;
  line-height: 17px;
}

.change span + span {
  padding-top: 0;
}

.change .arrow {
  margin: 0 0 2px 2px;
}

/* Workspace */
.workspace {
  display: flex;
  flex: 1;
  background: linear-gradient(#a6c3ec, #98b6e2 7%, #7fa1cf 28%, #7799c8 38%, #557cb0 74%, #5a82b8 79%, #6690ce);
}

.recovery {
  display: flex;
  flex-direction: column;
  width: 249px;
  margin: 2px 0 3px;
  border: 1px solid #6b8fc2;
  border-left-width: 2px;
  border-radius: 3px;
  box-sizing: border-box;
  background: #d5e4f2;
}

.recovery h2 {
  margin: 0 1px;
  padding-left: 2px;
  font-size: 11px;
  font-weight: 400;
  line-height: 18px;
  background: #b7cfe9;
}

.hint {
  margin: 8px 0 0 9px;
  font-family: "Noto Sans", "Open Sans", sans-serif;
  line-height: 16px;
  color: #2b5797;
}

.recovery h3 {
  margin: 14px 9px 0;
  border-bottom: 1px solid #7f9fcb;
  font-size: 13px;
  line-height: 18px;
}

.file-list {
  display: flex;
  flex: 1;
  justify-content: space-between;
  margin: 7px 9px 0 21px;
  border: 1px solid #74849e;
  background: #fff;
  color: #000;
}

.file {
  display: flex;
  gap: 10px;
  padding: 5px 0 0 11px;
  line-height: 18px;
  white-space: nowrap;
}

.list-scroll {
  display: flex;
  flex-direction: column;
  align-items: center;
  justify-content: space-between;
  width: 21px;
  padding: 8px 0;
  background: #efefef;
}

.which-file {
  display: flex;
  align-items: center;
  gap: 9px;
  margin: 80px 0 0 12px;
  color: #0b0bb4;
}

.close-button {
  align-self: flex-end;
  width: 70px;
  height: 25px;
  margin: 10px 10px 9px 0;
  border: 1px solid #c6cfda;
  border-radius: 4px;
  background: #fff;
  color: #000;
}

.desk {
  position: relative;
  display: flex;
  flex: 1;
  justify-content: center;
  padding: 5px 0 20px 4px;
}

.swoosh {
  position: absolute;
  left: 0;
  top: 0;
}

.paper {
  position: relative;
  width: 992px;
  max-width: 100%;
  padding: 14px 0 0 47px;
  background: #fff;
  box-shadow: 2px 2px 5px #2d4260, -1px 0 0 #42536c;
  box-sizing: border-box;
  font-family: "Liberation Serif", serif;
  font-size: 23px;
  color: #000;
}

.line {
  margin: 0;
  line-height: 38px;
  white-space: nowrap;
}

.line.short {
  line-height: 25px;
}

.misspelled {
  text-decoration: underline wavy #c23a3a 1px;
  text-underline-offset: 4px;
}

.fractions {
  display: flex;
  align-items: center;
  gap: 6px;
  height: 50px;
}

.operator {
  font-size: 26px;
}

.second {
  margin-left: 69px;
}

.frac {
  display: flex;
  flex-direction: column;
  text-align: center;
  font-size: 24px;
}

.frac span {
  padding: 0 1px 7px;
  line-height: 20px;
}

.frac span + span {
  padding: 6px 1px 0;
  border-top: 1px solid #000;
}

.equation {
  gap: 10px;
}

.sign {
  font-size: 31px;
}

.mixed {
  display: flex;
  align-items: center;
  gap: 4px;
}

.centered {
  justify-content: center;
  height: 60px;
  padding-left: 12px;
}

.last {
  gap: 4px;
  height: 66px;
}

.low {
  padding-top: 16px;
}

.formula {
  display: flex;
  align-items: center;
  gap: 4px;
  padding-left: 6px;
  font-size: 29px;
  font-weight: 700;
  color: #1c1c1c;
}

.formula .mixed {
  gap: 3px;
}

.formula .frac {
  font-size: 28px;
}

.formula .frac span {
  padding: 0 4px 9px;
}

.formula .frac span + span {
  padding: 9px 4px 0;
}

.bracket {
  width: 10px;
  height: 68px;
  border-left: 2px solid #1c1c1c;
  border-radius: 14px 0 0 14px / 34px 0 0 34px;
  box-sizing: border-box;
}

.bracket.right {
  border-left: 0;
  border-right: 2px solid #1c1c1c;
  border-radius: 0 14px 14px 0 / 0 34px 34px 0;
}

/* Vertical scroll bar */
.scrollbar {
  display: flex;
  flex-direction: column;
  align-items: center;
  width: 20px;
  padding: 0 0 2px 1px;
  background: #a9c6f0;
}

.splitter {
  width: 10px;
  height: 2px;
  margin: 2px 0 5px;
  background: #2d4670;
}

.ruler {
  margin-bottom: 4px;
}

.scrollbar button {
  width: 18px;
  height: 21px;
  background: #84a5d2;
}

.scrollbar .browse {
  background: none;
}

.track {
  display: flex;
  flex: 1;
  align-items: flex-end;
  width: 18px;
  background: linear-gradient(90deg, #91afd9, #7697c6);
}

.thumb {
  display: flex;
  align-items: center;
  justify-content: center;
  width: 18px;
  height: 57%;
  border: 1px solid #58739c;
  border-radius: 2px;
  box-sizing: border-box;
  background: linear-gradient(90deg, #edf0f6, #dfe4ee 45%, #b9c5da 60%, #ccd6e6);
}

/* Status bar */
.status-bar {
  display: flex;
  height: 27px;
  border-top: 1px solid #4e72a8;
  border-bottom: 1px solid #8fa5c4;
  box-sizing: border-box;
  background: linear-gradient(#fff, #cfe0f8 8%, #bcd4f6 40%, #abc8f3 45%, #d5e4fa);
}

.status {
  padding: 0 9px;
  border-right: 1px solid #8fabd6;
}

.status.language {
  gap: 15px;
  padding: 0 7px 0 11px;
}

.status-right {
  display: flex;
  align-items: center;
  gap: 9px;
  width: 342px;
  margin-left: auto;
  padding: 0 5px 0 7px;
  border-left: 1px solid #5f86bf;
  box-sizing: border-box;
  background: linear-gradient(#cfe1fa, #9fc0ec 20%, #76a0dc 60%, #a1c1ec);
}

.views {
  display: flex;
  height: 23px;
  border: 1px solid #6f93c8;
}

.views button {
  width: 22px;
  border-right: 1px solid #a8c3e8;
  background: #bfd5f2;
}

.views .on {
  background: linear-gradient(#fbdca4, #f6bd62 50%, #fde79a);
}

.zoom {
  appearance: none;
  flex: 1;
  min-width: 0;
  height: 20px;
  margin: 0 -9px;
  background: linear-gradient(transparent 9px, #4d74ad 9px, #4d74ad 10px, #dce9fb 10px, #dce9fb 11px, transparent 11px);
}

.zoom::-webkit-slider-thumb {
  appearance: none;
  width: 11px;
  height: 16px;
  border: 1px solid #4a6490;
  border-radius: 2px 2px 6px 6px;
  background: linear-gradient(90deg, #e8effa 4px, #7d8fab 4px, #7d8fab 5px, #e8effa 5px);
}

/* Taskbar */
.taskbar {
  display: flex;
  align-items: center;
  justify-content: space-between;
  position: relative;
  height: 59px;
  background: linear-gradient(90deg, #e5dfda, #e2dedb 45%, #efdcce 55%, #fbe6cf 68%, #f8e4cc 76%, #e8dad3 84%, #e0dad9);
  font-size: 14px;
  color: #1f1f1f;
}

.widget {
  gap: 10px;
  margin: 0 0 2px 24px;
  font-family: "Noto Sans", "Open Sans", sans-serif;
  text-align: left;
  line-height: 20px;
}

.coins {
  position: relative;
  height: 38px;
}

.badge {
  position: absolute;
  right: -3px;
  top: -3px;
  width: 19px;
  border-radius: 10px;
  background: #b92f23;
  color: #fff;
  font-size: 12px;
  font-weight: 400;
  line-height: 20px;
  text-align: center;
}

.up {
  color: #1c7a26;
}

.apps {
  display: flex;
  align-items: center;
  gap: 7px;
  position: absolute;
  left: 575px;
}

.app {
  width: 48px;
  height: 48px;
  position: relative;
  border-radius: 5px;
}

.search {
  display: flex;
  align-items: center;
  gap: 12px;
  width: 273px;
  height: 39px;
  margin: 0 0 0 2px;
  padding-left: 13px;
  border: 1px solid #d2ccc8;
  border-radius: 20px;
  box-sizing: border-box;
  background: #f5f3f2;
}

.search input {
  flex: 1;
  min-width: 0;
  font-size: 16px;
  outline: 0;
}

.search input::placeholder {
  color: #5a5755;
}

.running::after,
.current::after {
  content: "";
  position: absolute;
  left: 20px;
  bottom: 0;
  width: 8px;
  height: 4px;
  border-radius: 2px;
  background: #8c7c76;
}

.running svg {
  margin: -6px -6px 0 0;
}

.current {
  background: #fcf3e8;
  box-shadow: 0 0 1px #b9aaa0;
}

.current::after {
  left: 14px;
  width: 20px;
  background: #70529e;
}

.tray {
  display: flex;
  align-items: center;
  gap: 11px;
  margin-left: auto;
  padding-right: 27px;
}

.lang {
  margin: 0 14px 0 16px;
}

.system {
  gap: 10px;
}

.clock {
  display: block;
  margin: 0 0 2px 10px;
  line-height: 20px;
  text-align: right;
}
</style>
